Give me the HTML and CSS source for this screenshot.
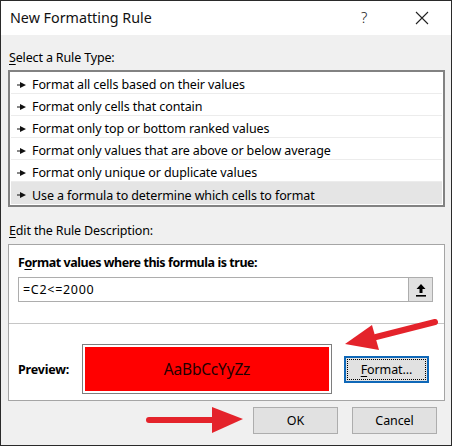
FILE: index.html
```html
<!DOCTYPE html>
<html>
<head>
<meta charset="utf-8">
<link rel="stylesheet" href="styles.css">
</head>
<body>
<div class="window">
  <div class="titlebar">
    <span class="title">New Formatting Rule</span>
    <span class="help">?</span>
    <span class="close">
      <svg width="14" height="14" viewBox="0 0 14 14"><path d="M1 1 L13 13 M13 1 L1 13" stroke="#222" stroke-width="1.1" fill="none"/></svg>
    </span>
  </div>
  <div class="content">
    <div class="label label-select"><u>S</u>elect a Rule Type:</div>
    <div class="list">
      <div class="row"><svg class="tri" width="9" height="6" viewBox="0 0 9 6"><path d="M0 2.5 H4 V3.5 H0 Z M3 0 L9 3 L3 6 Z" fill="#111"/></svg>Format all cells based on their values</div>
      <div class="row"><svg class="tri" width="9" height="6" viewBox="0 0 9 6"><path d="M0 2.5 H4 V3.5 H0 Z M3 0 L9 3 L3 6 Z" fill="#111"/></svg>Format only cells that contain</div>
      <div class="row"><svg class="tri" width="9" height="6" viewBox="0 0 9 6"><path d="M0 2.5 H4 V3.5 H0 Z M3 0 L9 3 L3 6 Z" fill="#111"/></svg>Format only top or bottom ranked values</div>
      <div class="row"><svg class="tri" width="9" height="6" viewBox="0 0 9 6"><path d="M0 2.5 H4 V3.5 H0 Z M3 0 L9 3 L3 6 Z" fill="#111"/></svg>Format only values that are above or below average</div>
      <div class="row"><svg class="tri" width="9" height="6" viewBox="0 0 9 6"><path d="M0 2.5 H4 V3.5 H0 Z M3 0 L9 3 L3 6 Z" fill="#111"/></svg>Format only unique or duplicate values</div>
      <div class="row selected"><svg class="tri" width="9" height="6" viewBox="0 0 9 6"><path d="M0 2.5 H4 V3.5 H0 Z M3 0 L9 3 L3 6 Z" fill="#111"/></svg>Use a formula to determine which cells to format</div>
    </div>
    <div class="label label-edit"><u>E</u>dit the Rule Description:</div>
    <div class="desc">
      <div class="desc-top">
        <div class="bold heading">F<u>o</u>rmat values where this formula is true:</div>
        <div class="input">
          <span class="formula">=C2&lt;=2000</span>
          <span class="ref-btn">
            <svg width="12" height="14" viewBox="0 0 12 14"><path d="M6 1 L10.5 6 L7.5 6 L7.5 10 L4.5 10 L4.5 6 L1.5 6 Z" fill="#000"/><rect x="1" y="12" width="10" height="1.6" fill="#000"/></svg>
          </span>
        </div>
      </div>
      <div class="desc-bottom">
        <span class="bold preview-label">Preview:</span>
        <div class="preview"><div class="preview-inner">AaBbCcYyZz</div></div>
        <div class="btn default"><span class="focus"><u>F</u>ormat...</span></div>
      </div>
    </div>
    <div class="actions">
      <div class="btn">OK</div>
      <div class="btn">Cancel</div>
    </div>
  </div>
  <svg class="arrows" width="452" height="446" viewBox="0 0 452 446">
    <line x1="376" y1="337" x2="435" y2="322" stroke="#e4232b" stroke-width="6" stroke-linecap="round"/>
    <polygon points="345,344 372,325 379,350" fill="#e4232b"/>
    <line x1="149" y1="420" x2="216" y2="420" stroke="#e4232b" stroke-width="6" stroke-linecap="round"/>
    <polygon points="212,407 243,419 212,433" fill="#e4232b"/>
  </svg>
</div>
</body>
</html>
```
FILE: styles.css
```css
* { box-sizing: border-box; }
html, body { margin: 0; padding: 0; }
body {
  font-family: "Noto Sans", "DejaVu Sans", sans-serif;
  font-size: 12.5px;
  color: #000;
  background: #fff;
}
.window {
  position: relative;
  width: 452px;
  height: 446px;
  border: 1px solid #2a2a2a;
  background: #f0f0f0;
  overflow: hidden;
}
.titlebar {
  height: 34px;
  background: #fff;
  display: flex;
  align-items: center;
  padding-left: 9px;
}
.title {
  font-size: 14.3px;
  flex: 1;
  padding-bottom: 1px;
  color: #111;
}
.help {
  font-size: 15px;
  font-weight: 300;
  color: #222;
  width: 14px;
  margin-right: 40px;
  padding-bottom: 2px;
}
.close {
  width: 14px;
  height: 14px;
  margin-right: 22px;
  display: flex;
  margin-bottom: 1px;
}
.content {
  padding: 0 6px 0 7px;
}
.label {
  height: 16px;
  line-height: 16px;
  letter-spacing: -0.15px;
  padding-left: 1px;
}
.label-select { margin-top: 15px; }
.label-edit { margin-top: 16px; }
u { text-decoration-thickness: 1px; text-underline-offset: 2px; }
.list {
  margin-top: 4px;
  width: 437px;
  border: 2px solid #828282;
  background: #fff;
  padding: 0 1px 1px 1px;
}
.row {
  height: 22px;
  line-height: 17px;
  padding-top: 4px;
  border-bottom: 1px solid #ececec;
  display: flex;
  align-items: center;
  letter-spacing: -0.1px;
}
.row.selected {
  background: #e5e5e5;
  border-bottom: none;
}
.tri {
  margin-left: 6px;
  margin-right: 6px;
  flex: none;
}
.desc {
  margin-top: 5px;
  width: 437px;
  border: 1px solid #a5a5a5;
  background: #fff;
}
.desc-top {
  height: 79px;
  border-bottom: 1px solid #c6c6c6;
  padding: 10px 0 0 9px;
}
.bold { font-weight: 700; letter-spacing: -0.45px; }
.heading { height: 16px; line-height: 16px; }
.input {
  margin-top: 6px;
  width: 415px;
  height: 25px;
  border: 1px solid #adadad;
  display: flex;
  align-items: center;
  justify-content: space-between;
}
.formula {
  padding-left: 4px;
  letter-spacing: 0.7px;
}
.ref-btn {
  width: 24px;
  height: 23px;
  background: #e1e1e1;
  border-left: 1px solid #adadad;
  display: flex;
  align-items: center;
  justify-content: center;
}
.desc-bottom {
  height: 76px;
  display: flex;
  align-items: center;
  padding: 14px 0 0 9px;
}
.preview-label { width: 64px; letter-spacing: -0.2px; }
.preview {
  width: 250px;
  height: 50px;
  border: 1px solid #7e7e7e;
  padding: 2px;
}
.preview-inner {
  height: 100%;
  background: #ff0000;
  display: flex;
  align-items: center;
  justify-content: center;
  font-size: 15.5px;
  color: #220000;
  letter-spacing: -0.2px;
}
.btn {
  width: 85px;
  height: 27px;
  background: #e1e1e1;
  border: 1px solid #adadad;
  display: flex;
  align-items: center;
  justify-content: center;
  letter-spacing: -0.1px;
}
.btn.default {
  margin-left: 12px;
  border: 2px solid #0f68b8;
  padding: 1px;
}
.focus {
  width: 100%;
  height: 100%;
  border: 1px dotted #000;
  display: flex;
  align-items: center;
  justify-content: center;
}
.actions {
  display: flex;
  justify-content: flex-end;
  gap: 14px;
  margin-top: 6px;
  padding-right: 8px;
}
.arrows {
  position: absolute;
  left: -1px;
  top: -1px;
  pointer-events: none;
}
```
